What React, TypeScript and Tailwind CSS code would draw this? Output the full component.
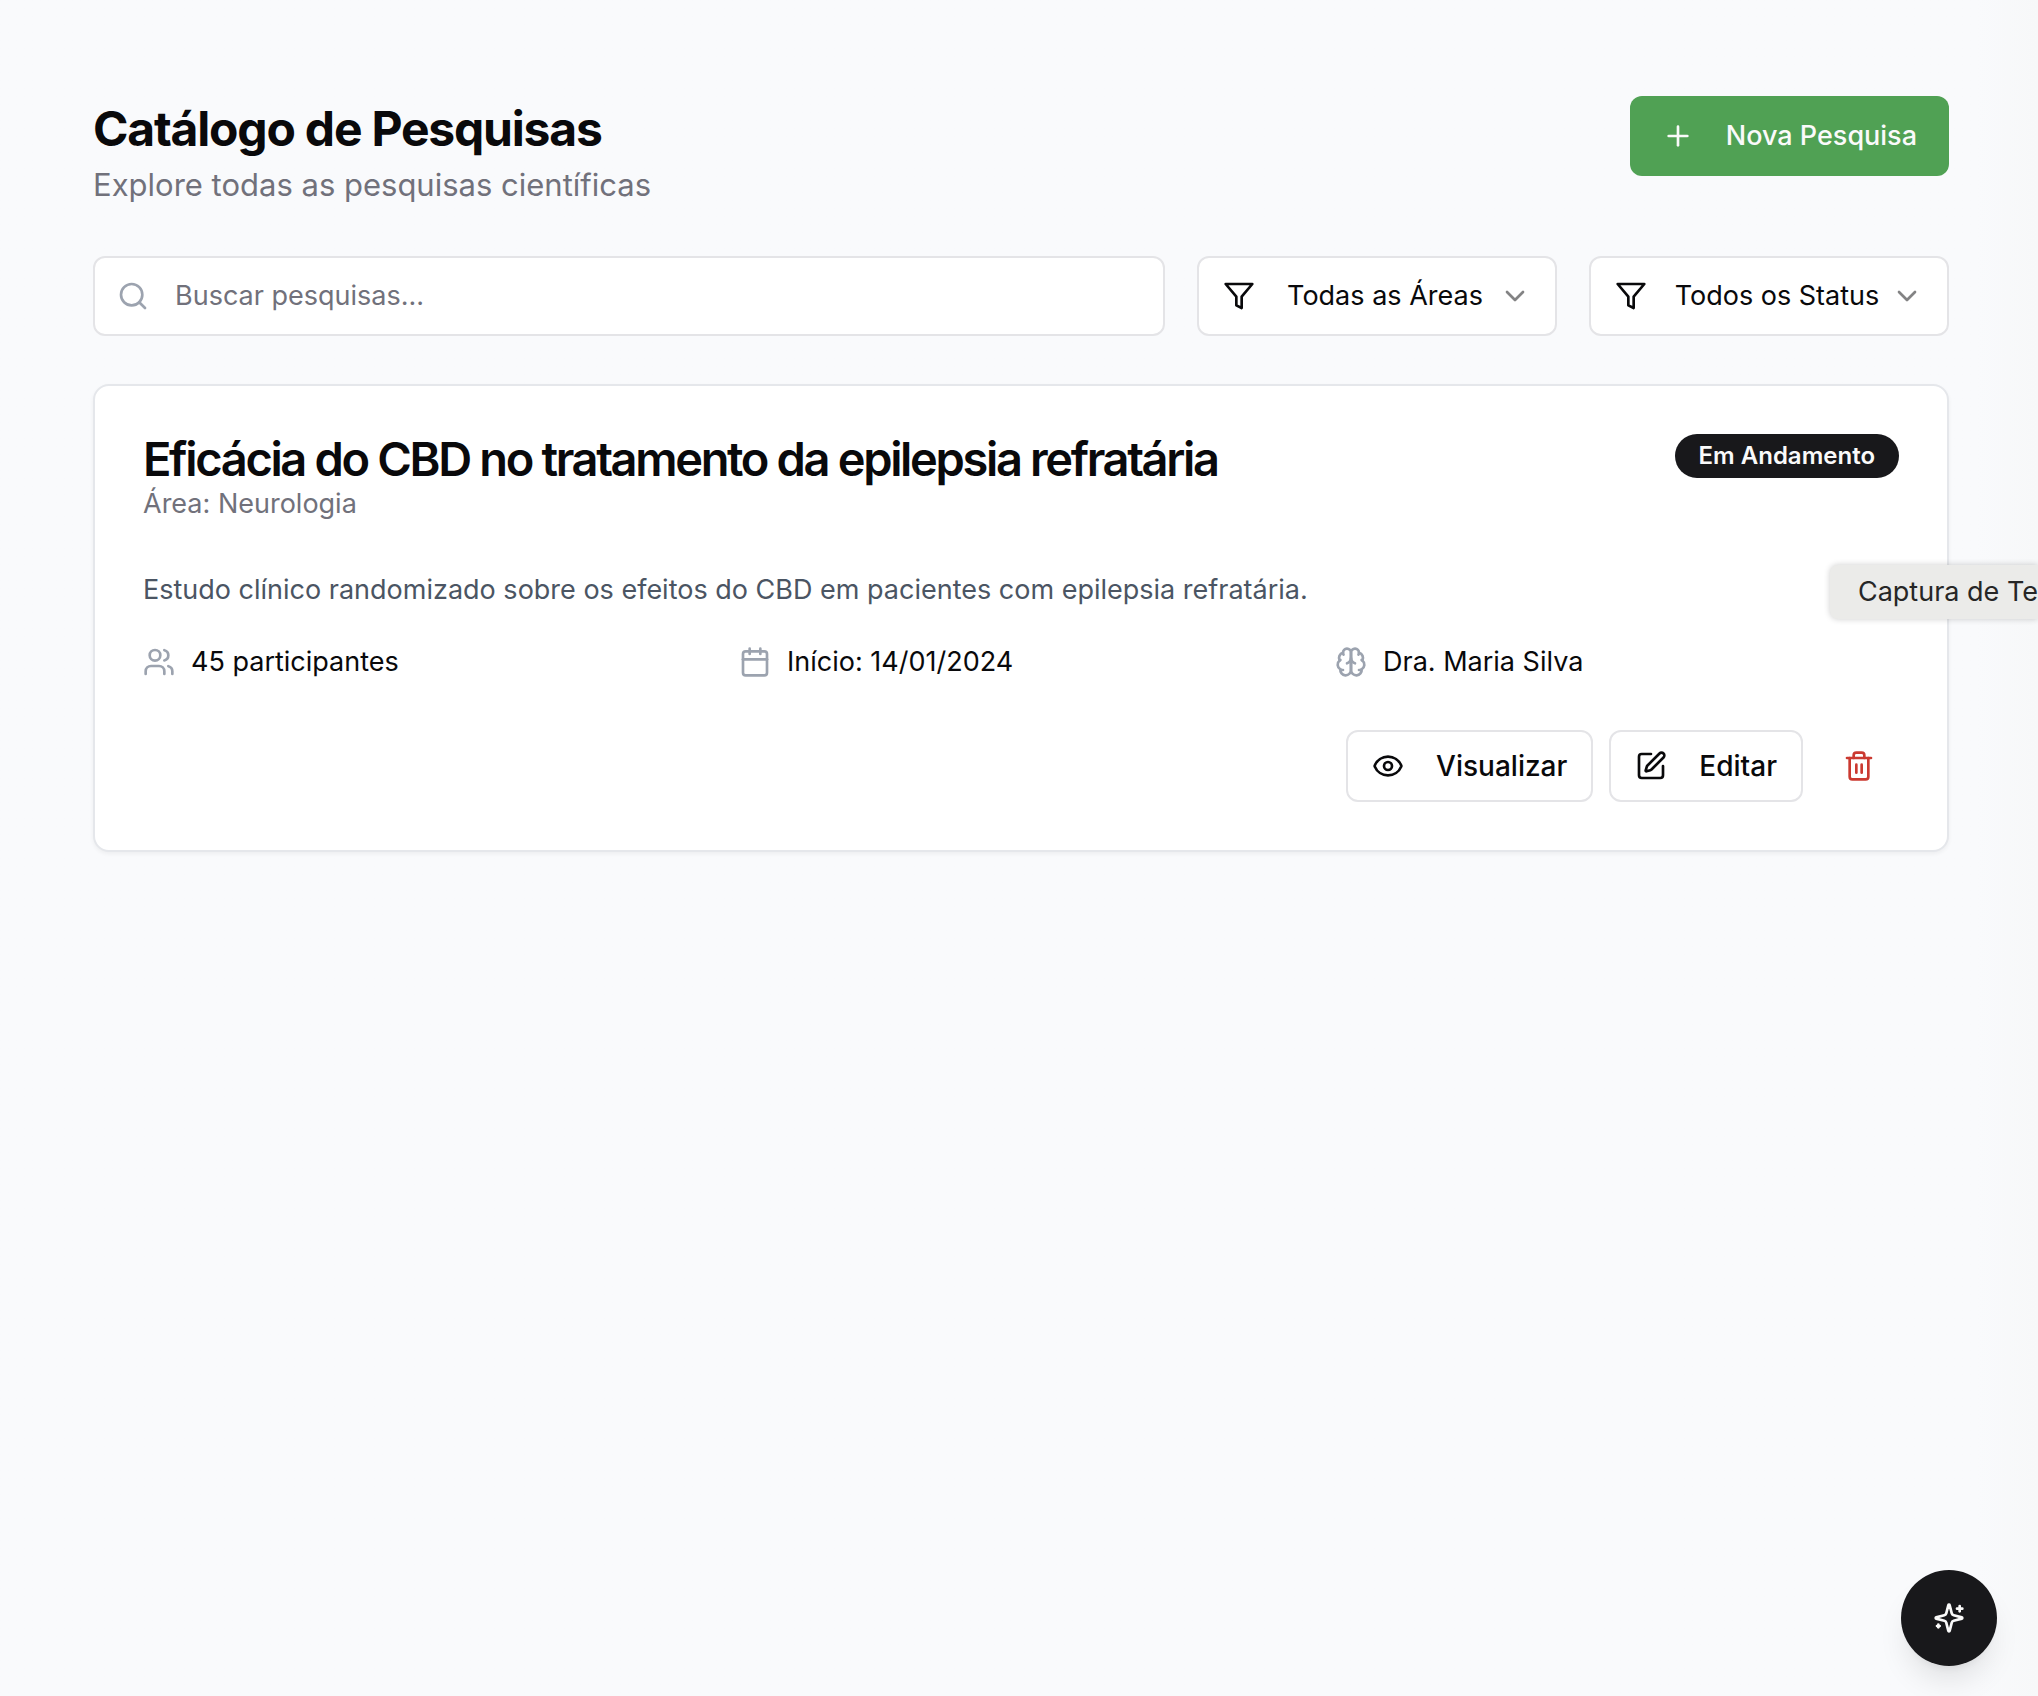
import {
  Calendar,
  ChevronDown,
  Eye,
  Plus,
  Search,
  Trash2,
  Users,
} from "lucide-react";
import type { ReactNode } from "react";

function Glyph({ className, children }: { className?: string; children: ReactNode }) {
  return (
    <svg
      viewBox="0 0 24 24"
      fill="none"
      stroke="currentColor"
      strokeWidth="2"
      strokeLinecap="round"
      strokeLinejoin="round"
      aria-hidden="true"
      className={className}
    >
      {children}
    </svg>
  );
}

function FilterIcon() {
  return (
    <Glyph className="size-8 shrink-0">
      <polygon points="22 3 2 3 10 12.46 10 19 14 21 14 12.46 22 3" />
    </Glyph>
  );
}

function BrainIcon() {
  return (
    <Glyph className="size-8 shrink-0 text-[#9ca3af]">
      <path d="M12 5a3 3 0 1 0-5.997.125 4 4 0 0 0-2.526 5.77 4 4 0 0 0 .556 6.588A4 4 0 1 0 12 18Z" />
      <path d="M12 5a3 3 0 1 1 5.997.125 4 4 0 0 1 2.526 5.77 4 4 0 0 1-.556 6.588A4 4 0 1 1 12 18Z" />
      <path d="M15 13a4.5 4.5 0 0 1-3-4 4.5 4.5 0 0 1-3 4" />
      <path d="M17.599 6.5a3 3 0 0 0 .399-1.375" />
      <path d="M6.003 5.125A3 3 0 0 0 6.401 6.5" />
      <path d="M3.477 10.896a4 4 0 0 1 .585-.396" />
      <path d="M19.938 10.5a4 4 0 0 1 .585.396" />
      <path d="M6 18a4 4 0 0 1-1.967-.516" />
      <path d="M19.967 17.484A4 4 0 0 1 18 18" />
    </Glyph>
  );
}

function EditIcon() {
  return (
    <Glyph className="size-8 shrink-0">
      <path d="M12 3H5a2 2 0 0 0-2 2v14a2 2 0 0 0 2 2h14a2 2 0 0 0 2-2v-7" />
      <path d="M18.375 2.625a1 1 0 0 1 3 3l-9.013 9.014a2 2 0 0 1-.853.505l-2.873.84a.5.5 0 0 1-.62-.62l.84-2.873a2 2 0 0 1 .506-.852z" />
    </Glyph>
  );
}

function SparklesIcon() {
  return (
    <Glyph className="size-8 shrink-0">
      <path d="M9.937 15.5A2 2 0 0 0 8.5 14.063l-6.135-1.582a.5.5 0 0 1 0-.962L8.5 9.936A2 2 0 0 0 9.937 8.5l1.582-6.135a.5.5 0 0 1 .963 0L14.063 8.5A2 2 0 0 0 15.5 9.937l6.135 1.581a.5.5 0 0 1 0 .964L15.5 14.063a2 2 0 0 0-1.437 1.437l-1.582 6.135a.5.5 0 0 1-.963 0z" />
      <path d="M20 3v4" />
      <path d="M22 5h-4" />
      <path d="M4 17v2" />
      <path d="M5 18H3" />
    </Glyph>
  );
}

function FilterSelect({ label, option }: { label: string; option: string }) {
  return (
    <label className="flex h-20 w-[360px] shrink-0 items-center rounded-xl border-2 border-zinc-200 bg-white px-6">
      <FilterIcon />
      <select
        aria-label={label}
        className="ml-4 min-w-0 flex-1 appearance-none bg-transparent text-center outline-none [text-align-last:center]"
      >
        <option>{option}</option>
      </select>
      <ChevronDown className="size-8 shrink-0 opacity-50" />
    </label>
  );
}

function OutlineButton({ icon, children }: { icon: ReactNode; children: ReactNode }) {
  return (
    <button
      type="button"
      className="flex h-18 items-center gap-8 rounded-xl border-2 border-zinc-200 bg-white px-6 text-[28px] font-medium"
    >
      {icon}
      {children}
    </button>
  );
}

function Fact({ icon, children }: { icon: ReactNode; children: ReactNode }) {
  return (
    <div className="flex items-center gap-4">
      {icon}
      <span>{children}</span>
    </div>
  );
}

function StudyCard() {
  return (
    <article className="mt-12 rounded-2xl border-2 border-gray-200 bg-white p-12 shadow-[0_2px_4px_rgba(0,0,0,0.05)]">
      <div className="flex items-start justify-between">
        <div>
          <h2 className="text-[47px] leading-[50px] font-semibold tracking-tighter">
            Eficácia do CBD no tratamento da epilepsia refratária
          </h2>
          <p className="text-zinc-500">Área: Neurologia</p>
        </div>
        <span className="flex h-11 items-center rounded-full bg-zinc-900 px-6 text-2xl font-semibold text-zinc-50">
          Em Andamento
        </span>
      </div>
      <p className="mt-[46px] text-[#4b5563]">
        Estudo clínico randomizado sobre os efeitos do CBD em pacientes com epilepsia refratária.
      </p>
      <div className="mt-8 grid grid-cols-3 gap-8">
        <Fact icon={<Users className="size-8 shrink-0 text-[#9ca3af]" />}>45 participantes</Fact>
        <Fact icon={<Calendar className="size-8 shrink-0 text-[#9ca3af]" />}>Início: 14/01/2024</Fact>
        <Fact icon={<BrainIcon />}>Dra. Maria Silva</Fact>
      </div>
      <div className="mt-12 flex justify-end gap-4">
        <OutlineButton icon={<Eye className="size-8 shrink-0" />}>Visualizar</OutlineButton>
        <OutlineButton icon={<EditIcon />}>Editar</OutlineButton>
        <button
          type="button"
          aria-label="Excluir"
          className="flex h-18 items-center rounded-xl px-6 text-[#cb3a31]"
        >
          <Trash2 className="size-8 shrink-0" />
        </button>
      </div>
    </article>
  );
}

export default function App() {
  return (
    <div className="relative min-h-screen overflow-hidden bg-linear-to-r from-[#f9fafc] from-97% to-[#f7f8f9] font-['Inter',sans-serif] text-[27px] leading-10 text-zinc-950">
      <main className="pt-24 pr-[89px] pl-[93px]">
        <header className="flex items-start justify-between">
          <div>
            <h1 className="text-[48px] leading-[66px] font-bold tracking-tight">Catálogo de Pesquisas</h1>
            <p className="text-[31px] leading-[46px] text-zinc-500">Explore todas as pesquisas científicas</p>
          </div>
          <button
            type="button"
            className="flex h-20 items-center gap-8 rounded-xl bg-[#50a154] px-8 font-medium text-zinc-50"
          >
            <Plus className="size-8 shrink-0" />
            Nova Pesquisa
          </button>
        </header>

        <div className="mt-12 flex gap-8">
          <label className="flex h-20 min-w-0 flex-1 items-center gap-[26px] rounded-xl border-2 border-zinc-200 bg-white px-[22px]">
            <Search className="size-8 shrink-0 text-[#9ca3af]" />
            <input
              type="text"
              aria-label="Buscar pesquisas"
              placeholder="Buscar pesquisas..."
              className="min-w-0 flex-1 bg-transparent outline-none placeholder:text-zinc-500"
            />
          </label>
          <FilterSelect label="Área" option="Todas as Áreas" />
          <FilterSelect label="Status" option="Todos os Status" />
        </div>

        <StudyCard />
      </main>

      <div
        role="tooltip"
        className="absolute top-[565px] right-0 flex h-[54px] items-center rounded-l-lg bg-[#ebebe9] pl-7 whitespace-nowrap text-neutral-800 shadow-[0_0_6px_rgba(0,0,0,0.2)]"
      >
        Captura de Te
      </div>

      <button
        type="button"
        aria-label="Assistente"
        className="fixed right-[41px] bottom-[30px] flex size-24 items-center justify-center rounded-full bg-zinc-900 text-zinc-50 shadow-[0_20px_30px_-6px_rgba(0,0,0,0.1),0_8px_12px_-8px_rgba(0,0,0,0.1)]"
      >
        <SparklesIcon />
      </button>
    </div>
  );
}
